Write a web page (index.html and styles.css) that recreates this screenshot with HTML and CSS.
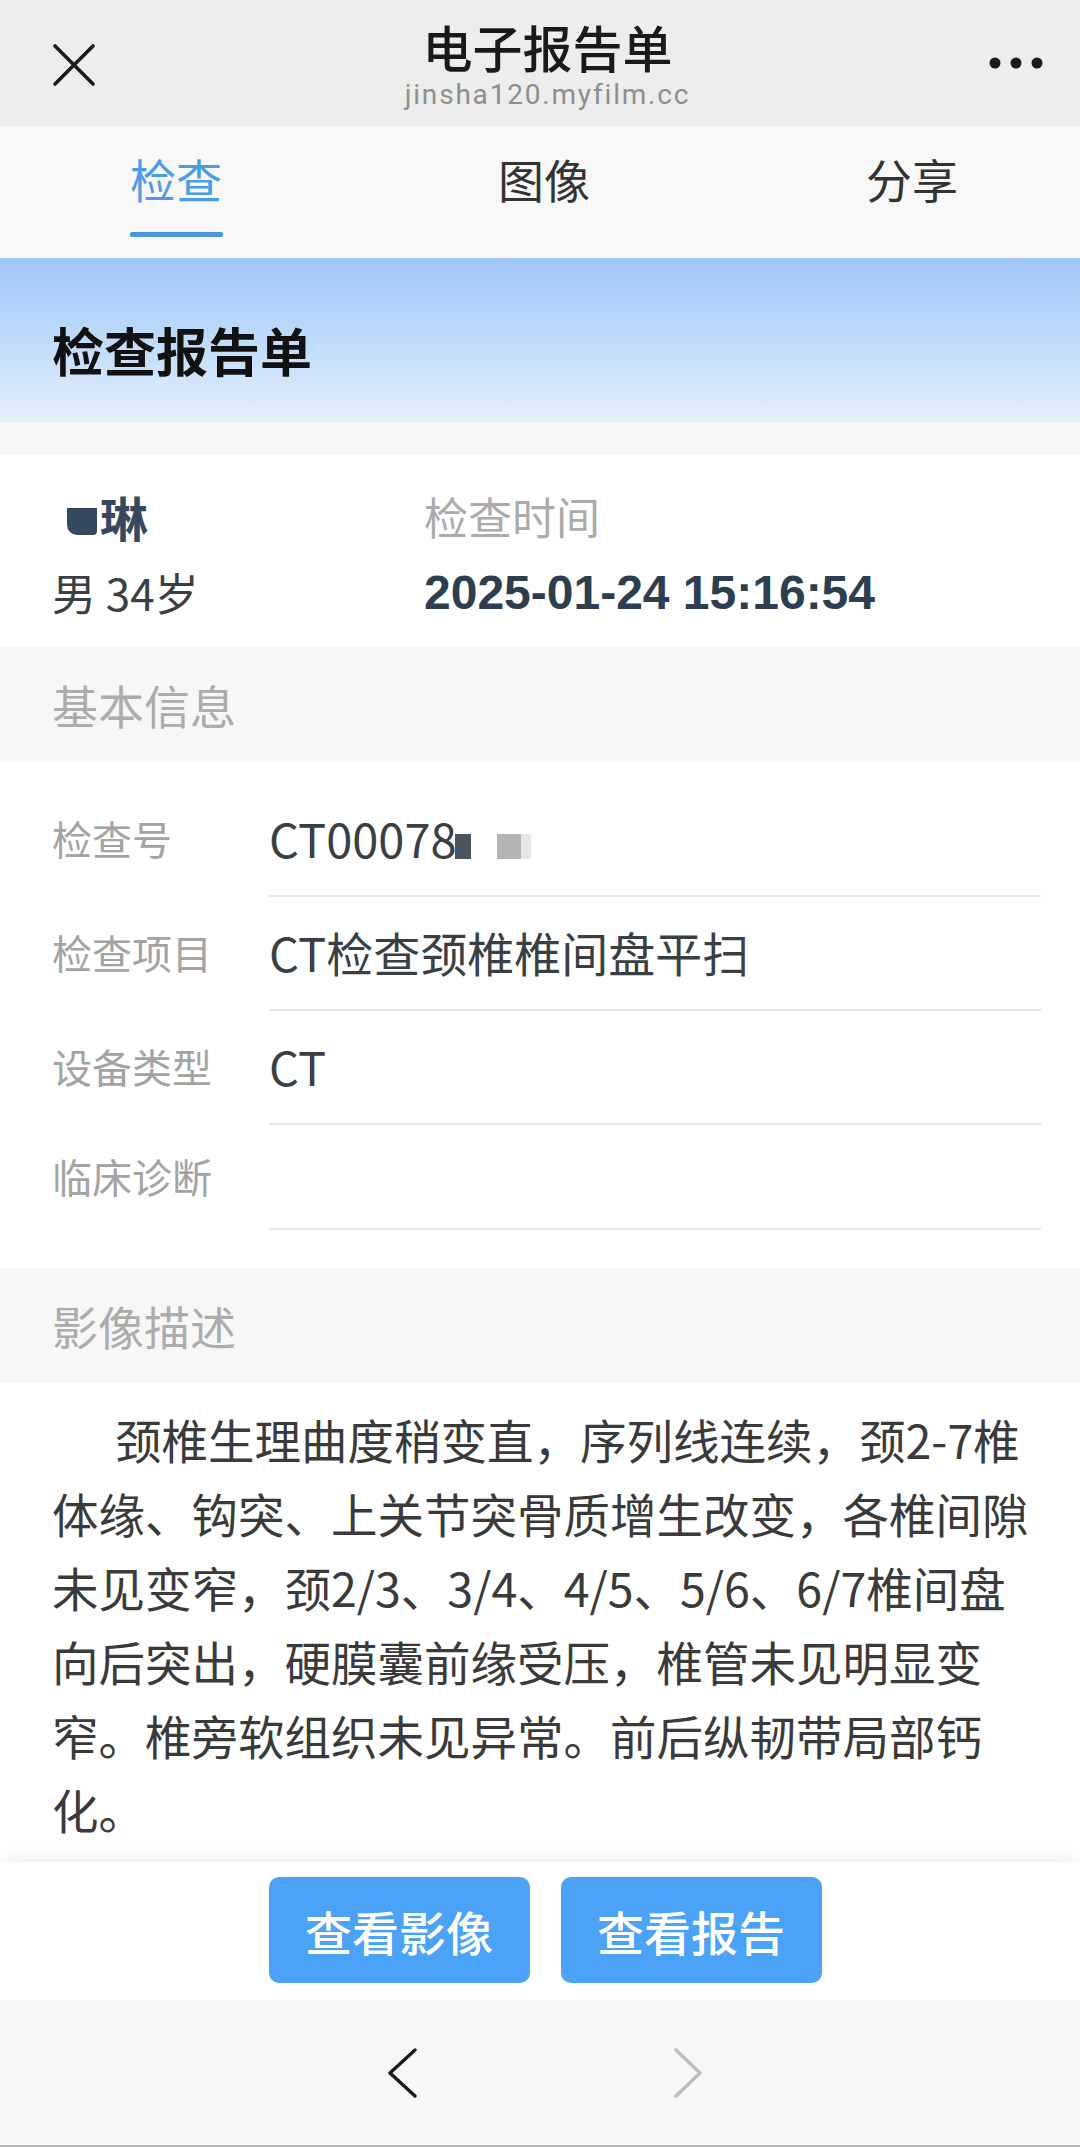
FILE: index.html
```html
<!DOCTYPE html>
<html lang="zh-CN">
<head>
<meta charset="utf-8">
<title>电子报告单</title>
<link rel="stylesheet" href="styles.css">
</head>
<body>
<div class="page">
  <header class="topbar">
    <div class="top-left">
      <svg class="icon-close" width="44" height="44" viewBox="0 0 44 44"><path d="M3 3 L41 41 M41 3 L3 41" stroke="#1a1a1a" stroke-width="3.6" stroke-linecap="round" fill="none"/></svg>
    </div>
    <div class="top-title">
      <div class="title">电子报告单</div>
      <div class="url">jinsha120.myfilm.cc</div>
    </div>
    <div class="top-right">
      <svg class="icon-more" width="54" height="14" viewBox="0 0 54 14"><circle cx="6" cy="7" r="5.5" fill="#1a1a1a"/><circle cx="27" cy="7" r="5.5" fill="#1a1a1a"/><circle cx="48" cy="7" r="5.5" fill="#1a1a1a"/></svg>
    </div>
  </header>

  <nav class="tabs">
    <div class="tab active"><span class="tab-label">检查</span><span class="tab-bar"></span></div>
    <div class="tab"><span class="tab-label">图像</span><span class="tab-bar"></span></div>
    <div class="tab"><span class="tab-label">分享</span><span class="tab-bar"></span></div>
  </nav>

  <section class="banner">
    <h1 class="banner-title">检查报告单</h1>
  </section>

  <section class="patient">
    <div class="patient-col left">
      <div class="name"><span class="mask-name"></span>琳</div>
      <div class="sexage">男 34岁</div>
    </div>
    <div class="patient-col right">
      <div class="time-label">检查时间</div>
      <div class="time-value">2025-01-24 15:16:54</div>
    </div>
  </section>

  <div class="section-title">基本信息</div>

  <section class="info">
    <div class="row">
      <div class="label">检查号</div>
      <div class="value">CT00078<span class="mask mask-dark"></span><span class="mask mask-gray"></span><span class="mask mask-light"></span></div>
    </div>
    <div class="row">
      <div class="label">检查项目</div>
      <div class="value">CT检查颈椎椎间盘平扫</div>
    </div>
    <div class="row">
      <div class="label">设备类型</div>
      <div class="value">CT</div>
    </div>
    <div class="row last">
      <div class="label">临床诊断</div>
      <div class="value"></div>
    </div>
  </section>

  <div class="section-title">影像描述</div>

  <section class="desc">
    <p class="desc-text">颈椎生理曲度稍变直，序列线连续，颈2-7椎体缘、钩突、上关节突骨质增生改变，各椎间隙未见变窄，颈2/3、3/4、4/5、5/6、6/7椎间盘向后突出，硬膜囊前缘受压，椎管未见明显变窄。椎旁软组织未见异常。前后纵韧带局部钙化。</p>
  </section>

  <section class="actions">
    <button class="btn">查看影像</button>
    <button class="btn">查看报告</button>
  </section>

  <footer class="browserbar">
    <svg class="chev" width="32" height="50" viewBox="0 0 32 50"><path d="M28 2 L3 25 L28 48" stroke="#1a1a1a" stroke-width="3.4" fill="none" stroke-linecap="round" stroke-linejoin="round"/></svg>
    <svg class="chev" width="32" height="50" viewBox="0 0 32 50"><path d="M3 2 L27 25 L3 48" stroke="#bdbdbd" stroke-width="3.4" fill="none" stroke-linecap="round" stroke-linejoin="round"/></svg>
  </footer>
</div>
</body>
</html>
```

FILE: styles.css
```css
* { box-sizing: border-box; }

html, body {
  margin: 0;
  padding: 0;
}

body {
  width: 1080px;
  height: 2147px;
  overflow: hidden;
  background: #f7f7f7;
  font-family: "Noto Sans CJK SC", "Noto Sans", sans-serif;
  color: #333;
}

.page {
  display: flex;
  flex-direction: column;
  width: 1080px;
  height: 2147px;
}

/* top bar */
.topbar {
  height: 126px;
  flex: none;
  background: #ededed;
  display: grid;
  grid-template-columns: 1fr auto 1fr;
  align-items: center;
  padding: 0 37px 0 52px;
}
.top-left { justify-self: start; display: flex; padding-top: 4px; }
.top-right { justify-self: end; display: flex; }
.top-title {
  align-self: start;
  padding-top: 22px;
  text-align: center;
}
.title {
  font-family: "Liberation Sans", "Noto Sans CJK SC", sans-serif;
  font-size: 50px;
  line-height: 58px;
  font-weight: 500;
  color: #1a1a1a;
}
.url {
  font-family: Roboto, "Liberation Sans", sans-serif;
  font-size: 28px;
  line-height: 33px;
  color: #8e8e8e;
  letter-spacing: 1.8px;
  margin-top: -2px;
}

/* tabs */
.tabs {
  height: 132px;
  flex: none;
  background: #f8f8f8;
  display: grid;
  grid-template-columns: repeat(3, 368px);
  justify-content: center;
  padding-left: 8px;
  overflow: hidden;
}
.tab {
  display: flex;
  flex-direction: column;
  align-items: center;
  padding-top: 21px;
}
.tab-label {
  font-size: 46px;
  line-height: 62px;
  color: #333;
}
.tab-bar {
  width: 93px;
  height: 5px;
  margin-top: 23px;
  border-radius: 2px;
  background: transparent;
}
.tab.active .tab-label { color: #4b9be6; }
.tab.active .tab-bar { background: #4a93e0; }

/* banner */
.banner {
  height: 164px;
  flex: none;
  background: linear-gradient(180deg, #9ec8f8 0%, #bcd9fa 45%, #e5f0fc 100%);
  padding: 61px 0 0 52px;
}
.banner-title {
  margin: 0;
  font-size: 52px;
  line-height: 62px;
  font-weight: 700;
  color: #111;
}

/* patient */
.patient {
  margin-top: 33px;
  height: 192px;
  flex: none;
  background: #fff;
  display: grid;
  grid-template-columns: 372px 1fr;
  padding: 23px 0 17px 52px;
}
.patient-col > div {
  height: 76px;
  display: flex;
  align-items: center;
}
.name {
  font-size: 48px;
  font-weight: 700;
  color: #34495e;
}
.mask-name {
  display: inline-block;
  width: 30px;
  height: 27px;
  margin: 10px 3px 0 15px;
  background: #34495e;
  border-radius: 0 0 4px 10px;
}
.sexage {
  font-size: 44px;
  color: #3a3f44;
}
.time-label {
  font-size: 44px;
  color: #ababab;
}
.time-value {
  font-family: "Liberation Sans", Arial, sans-serif;
  font-size: 48px;
  font-weight: 700;
  color: #2c3e50;
}

/* section titles */
.section-title {
  height: 115px;
  flex: none;
  background: #f7f7f7;
  padding-left: 52px;
  font-size: 46px;
  line-height: 115px;
  color: #acacac;
}

/* info rows */
.info {
  flex: none;
  height: 506px;
  background: #fff;
  padding: 21px 39px 0 52px;
}
.row {
  display: grid;
  grid-template-columns: 217px 1fr;
  height: 114px;
}
.row.last { height: 105px; }
.label {
  display: flex;
  align-items: center;
  padding-bottom: 4px;
  font-size: 40px;
  color: #a3a3a3;
}
.value {
  display: flex;
  align-items: center;
  padding-bottom: 4px;
  font-size: 47px;
  color: #3a3f44;
  border-bottom: 2px solid #e6e6e6;
}
.mask {
  display: inline-block;
  height: 25px;
  margin-top: 18px;
}
.mask-dark { width: 16px; background: #4a5560; margin-left: -2px; }
.mask-gray { width: 24px; background: #b3b3b3; margin-left: 26px; }
.mask-light { width: 10px; background: #e6e6e6; }

/* description */
.desc {
  flex: none;
  height: 479px;
  background: #fff;
  padding: 19px 43px 0 52px;
}
.desc-text {
  margin: 0;
  font-size: 46.5px;
  line-height: 74px;
  text-indent: 63px;
  color: #3a3a3a;
}

/* actions */
.actions {
  position: relative;
  flex: none;
  height: 138px;
  background: #fff;
  display: flex;
  justify-content: center;
  align-items: flex-start;
  gap: 31px;
  padding: 15px 0 0 10px;
  box-shadow: 0 -10px 16px -6px rgba(0, 0, 0, 0.07);
}
.btn {
  width: 261px;
  height: 106px;
  border: none;
  border-radius: 10px;
  background: #4ba3f7;
  color: #fff;
  font-family: "Noto Sans CJK SC", sans-serif;
  font-size: 47px;
  font-weight: 500;
  padding: 0;
}

/* browser bar */
.browserbar {
  flex: 1;
  background: #f7f7f7;
  display: flex;
  justify-content: center;
  align-items: center;
  gap: 254px;
  padding-left: 12px;
  border-bottom: 2px solid #b8b8b8;
}
```
